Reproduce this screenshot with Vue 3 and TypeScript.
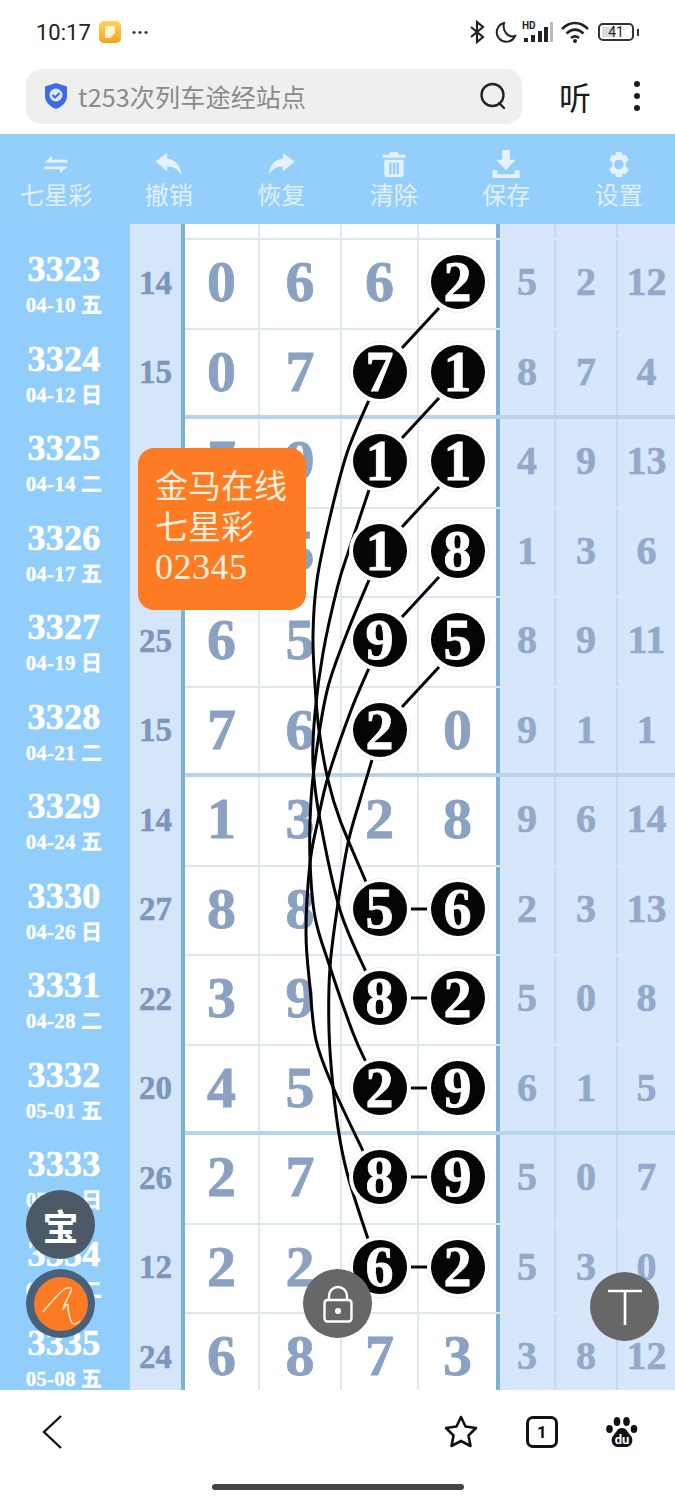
<script setup lang="ts">
interface Row { id: string; date: string; sum: string; main: string[]; balls: boolean[]; side: string[] }

const raw: [string, string, string, string, string, string][] = [
  ['3323', '04-10 五', '14', '0662', '0001', '5,2,12'],
  ['3324', '04-12 日', '15', '0771', '0011', '8,7,4'],
  ['3325', '04-14 二', '18', '7911', '0011', '4,9,13'],
  ['3326', '04-17 五', '14', '0518', '0011', '1,3,6'],
  ['3327', '04-19 日', '25', '6595', '0011', '8,9,11'],
  ['3328', '04-21 二', '15', '7620', '0010', '9,1,1'],
  ['3329', '04-24 五', '14', '1328', '0000', '9,6,14'],
  ['3330', '04-26 日', '27', '8856', '0011', '2,3,13'],
  ['3331', '04-28 二', '22', '3982', '0011', '5,0,8'],
  ['3332', '05-01 五', '20', '4529', '0011', '6,1,5'],
  ['3333', '05-03 日', '26', '2789', '0011', '5,0,7'],
  ['3334', '05-05 二', '12', '2262', '0011', '5,3,0'],
  ['3335', '05-08 五', '24', '6873', '0000', '3,8,12'],
]

const rows: Row[] = raw.map(([id, date, sum, main, balls, side]) => ({
  id,
  date,
  sum,
  main: main.split(''),
  balls: balls.split('').map((b) => b === '1'),
  side: side.split(','),
}))

type Pt = [number, number]

function smooth(p: Pt[]): string {
  let d = `M${p[0][0]} ${p[0][1]}`
  for (let i = 0; i < p.length - 1; i++) {
    const a = p[Math.max(i - 1, 0)]
    const b = p[i]
    const c = p[i + 1]
    const e = p[Math.min(i + 2, p.length - 1)]
    const c1: Pt = [b[0] + (c[0] - a[0]) / 6, b[1] + (c[1] - a[1]) / 6]
    const c2: Pt = [c[0] - (e[0] - b[0]) / 6, c[1] - (e[1] - b[1]) / 6]
    d += ` C${c1[0].toFixed(1)} ${c1[1].toFixed(1)} ${c2[0].toFixed(1)} ${c2[1].toFixed(1)} ${c[0]} ${c[1]}`
  }
  return d
}

const curves: string[] = ([
  [[369, 400], [347, 453], [330, 517], [317, 580], [313, 635], [315, 685], [319, 730], [328, 780], [340, 820], [366, 882]],
  [[369, 490], [350, 547], [338, 585], [323, 653], [315, 713], [313, 765], [320, 820], [340, 910], [366, 972]],
  [[369, 580], [347, 633], [328, 687], [317, 747], [311, 800], [310, 860], [315, 917], [330, 967], [353, 1033], [366, 1062]],
  [[369, 668], [350, 713], [328, 777], [318, 820], [310, 863], [306, 933], [310, 987], [316, 1040], [333, 1087], [363, 1151]],
  [[372, 760], [360, 800], [348, 843], [338, 903], [330, 967], [329, 1030], [333, 1087], [340, 1140], [349, 1180], [368, 1239]],
] as Pt[][]).map(smooth)

const links = [308, 398, 487, 577, 667].map((y) => ({ x1: 439, y1: y, x2: 402, y2: y + 40 }))
const dashes = [909, 998, 1088, 1177, 1267]

const tools = ['七星彩', '撤销', '恢复', '清除', '保存', '设置']
</script>

<template>
  <div class="screen">
    <header class="status">
      <div class="status-left">
        <span class="time">10:17</span>
        <svg class="app" viewBox="0 0 22 22">
          <defs>
            <linearGradient id="g" x1="0" y1="0" x2="0" y2="1">
              <stop offset="0" stop-color="#ffd35c" />
              <stop offset="1" stop-color="#f9a11b" />
            </linearGradient>
          </defs>
          <rect width="22" height="22" rx="5" fill="url(#g)" />
          <path d="M6 5h10v7l-5 5H6z" fill="#fff3d2" />
        </svg>
        <span class="more">···</span>
      </div>
      <div class="status-right">
        <svg width="17" height="24" viewBox="0 0 17 24" fill="none" stroke="#222" stroke-width="2.200">
          <path d="M2 7l12 10-6 5V2l6 5L2 17" />
        </svg>
        <svg class="moon" width="22" height="24" viewBox="0 0 22 24" fill="none" stroke="#222" stroke-width="2">
          <path d="M9 3a9.500 9.500 0 1 0 11 13C13 18 7 11 9 3z" />
        </svg>
        <svg class="signal" width="31" height="24" viewBox="0 0 31 24">
          <text x="0" y="9" class="hd">HD</text>
          <rect x="2" y="18" width="4" height="4" fill="#222" />
          <rect x="9" y="15" width="4" height="7" fill="#222" />
          <rect x="16" y="11" width="4" height="11" fill="#222" />
          <rect x="22" y="7" width="4" height="15" fill="#222" />
          <rect x="28" y="2" width="3" height="20" fill="#bbb" />
        </svg>
        <svg width="28" height="24" viewBox="0 0 28 24" fill="none" stroke="#222" stroke-width="2.600">
          <path d="M1 9c8-8 18-8 26 0M5.500 13.500c5.500-5 11.500-5 17 0M10 18c2.500-2 5.500-2 8 0" />
          <circle cx="14" cy="21" r="2" fill="#222" stroke="none" />
        </svg>
        <div class="battery"><span class="fill"></span><span class="level">41</span></div>
        <span class="nub"></span>
      </div>
    </header>

    <div class="searchrow">
      <div class="search">
        <svg class="shield" width="24" height="26" viewBox="0 0 24 26">
          <path d="M12 0l11 3.500V13c0 6-4.500 10.500-11 13C5.500 23.500 1 19 1 13V3.500z" fill="#3f6ae6" />
          <circle cx="12" cy="12" r="6.500" fill="#dfe7fb" />
          <path d="M8.500 12l2.500 2.500 4.500-4.500" fill="none" stroke="#3f6ae6" stroke-width="2" />
        </svg>
        <span class="query">t253次列车途经站点</span>
        <svg class="glass" width="28" height="28" viewBox="0 0 28 28" fill="none" stroke="#222" stroke-width="2.400">
          <circle cx="13.500" cy="13" r="11" />
          <path d="M20 21l5 5" stroke-linecap="round" />
        </svg>
      </div>
      <span class="listen">听</span>
      <div class="dots"><i></i><i></i><i></i></div>
    </div>

    <nav class="toolbar">
      <div v-for="(t, i) in tools" :key="t" class="tool">
        <svg width="30" height="30" viewBox="0 0 30 30" fill="#e4f2fd">
          <template v-if="i === 0">
            <path d="M3 13h24v-3H11V6zM27 17H3v3h16v4z" />
          </template>
          <template v-else-if="i === 1">
            <path d="M1 12l12-9v6c9 1 14 7 15 17-3-6-8-9-15-9v5z" />
          </template>
          <template v-else-if="i === 2">
            <path d="M29 12L17 3v6C8 10 3 16 2 26c3-6 8-9 15-9v5z" />
          </template>
          <template v-else-if="i === 3">
            <path fill-rule="evenodd" d="M11 2h8l1 3h7v3H3V5h7zM5 10h20v15c0 2-1 3-3 3H8c-2 0-3-1-3-3zM10 13v12h2.500V13zM13.800 13v12h2.500V13zM17.500 13v12H20V13z" />
          </template>
          <template v-else-if="i === 4">
            <path d="M11 0h8v10h6L15 21 5 10h6zM1 21h5v4h18v-4h5v8H1z" />
          </template>
          <template v-else>
            <path fill-rule="evenodd" d="M12 2h6l1 4 3-1 3 5-3 3v4l3 3-3 5-3-1-1 4h-6l-1-4-3 1-3-5 3-3v-4L5 10l3-5 3 1zM15 10a5 5 0 1 0 0 10 5 5 0 0 0 0-10z" />
          </template>
        </svg>
        <span>{{ t }}</span>
      </div>
    </nav>

    <main class="board">
      <div class="row head">
        <div class="period"></div>
        <div class="sum"></div>
        <div v-for="n in 4" :key="n" class="cell"></div>
        <div v-for="n in 3" :key="n" class="cell right" :class="'r' + n"></div>
      </div>
      <div v-for="(r, ri) in rows" :key="r.id" class="row" :class="{ thick: ri % 4 === 1 }">
        <div class="period">
          <span class="num">{{ r.id }}</span>
          <span class="date">{{ r.date }}</span>
        </div>
        <div class="sum">{{ r.sum }}</div>
        <div v-for="(d, i) in r.main" :key="i" class="cell">
          <span v-if="r.balls[i]" class="ball">{{ d }}</span>
          <template v-else>{{ d }}</template>
        </div>
        <div v-for="(d, i) in r.side" :key="i" class="cell right" :class="'r' + (i + 1)">{{ d }}</div>
      </div>

      <svg class="lines" viewBox="0 224 675 1166" fill="none" stroke="#050508" stroke-width="3">
        <path v-for="(c, i) in curves" :key="i" :d="c" />
        <line v-for="(l, i) in links" :key="i" :x1="l.x1" :y1="l.y1" :x2="l.x2" :y2="l.y2" />
        <line v-for="y in dashes" :key="y" x1="411" :y1="y" x2="427" :y2="y" />
      </svg>

      <div class="bubble">
        <div>金马在线</div>
        <div>七星彩</div>
        <div class="code">02345</div>
      </div>

      <div class="fab bao">宝</div>
      <div class="fab sign">
        <svg width="54" height="54" viewBox="0 0 54 54">
          <circle cx="27" cy="27" r="27" fill="#fb7a24" />
          <path d="M9 35C18 24 28 12 33 11c5-1 5 0 4 3-2 6-8 14-8 19 2-5 5-7 5-5 0 4 1 12 4 18 2 2 6 0 8-2" fill="none" stroke="#ffe2c2" stroke-width="1.500" />
        </svg>
      </div>
      <div class="fab lock">
        <svg width="30" height="38" viewBox="0 0 30 38" fill="none" stroke="#fff" stroke-width="2.400">
          <path d="M6 15V11a9 9 0 0 1 18 0v4" />
          <rect x="1.500" y="15" width="27" height="21.500" rx="3" />
          <circle cx="15" cy="26" r="3" fill="#fff" stroke="none" />
        </svg>
      </div>
      <div class="fab top">
        <svg width="36" height="40" viewBox="0 0 36 40" stroke="#fff" stroke-width="2.600">
          <path d="M1 4h34M18 4v34" />
        </svg>
      </div>
    </main>

    <footer class="bottom">
      <div class="navrow">
        <svg class="back" width="22" height="34" viewBox="0 0 22 34" fill="none" stroke="#111" stroke-width="2.400">
          <path d="M20 1L3 17l17 16" />
        </svg>
        <div class="navright">
          <svg width="34" height="34" viewBox="0 0 34 34" fill="none" stroke="#111" stroke-width="2.600" stroke-linejoin="round">
            <path d="M17 2l4.500 9.500 10.500 1.500-7.500 7.500 2 10.500-9.500-5-9.500 5 2-10.500L2 13l10.500-1.500z" />
          </svg>
          <div class="tabs">1</div>
          <svg width="32" height="32" viewBox="0 0 32 32">
            <ellipse cx="3.500" cy="13" rx="3.300" ry="4" fill="#111" />
            <ellipse cx="11" cy="5.500" rx="3.300" ry="4.500" fill="#111" />
            <ellipse cx="20.500" cy="5.500" rx="3.300" ry="4.500" fill="#111" />
            <ellipse cx="28" cy="13" rx="3.300" ry="4" fill="#111" />
            <path d="M16 12c5 0 6 5 9 8 3 4 1 11-5 11h-8c-6 0-8-7-5-11 3-3 4-8 9-8z" fill="#111" />
            <text x="16" y="28" text-anchor="middle" class="du">du</text>
          </svg>
        </div>
      </div>
      <div class="home"></div>
    </footer>
  </div>
</template>

<style scoped>
.screen {
  position: relative;
  width: 675px;
  height: 1500px;
  display: flex;
  flex-direction: column;
  background: #fff;
  overflow: hidden;
  font-family: "Noto Sans CJK SC", "Noto Sans", sans-serif;
}
.status {
  height: 60px;
  flex: none;
  display: flex;
  justify-content: space-between;
  align-items: center;
  padding: 4px 36px 0 36px;
  box-sizing: border-box;
}
.status-left, .status-right {
  display: flex;
  align-items: center;
}
.time {
  font: 22px Roboto, sans-serif;
  color: #222;
  width: 63px;
}
.app { width: 22px; height: 22px; }
.more {
  margin-left: 10px;
  font: bold 20px Roboto, sans-serif;
  color: #333;
}
.status-right { gap: 8px; }
.moon { margin-left: 1px; }
.signal { margin-left: -3px; }
.hd { font: bold 10px Roboto, sans-serif; fill: #222; }
.battery {
  position: relative;
  width: 36px;
  height: 18px;
  border: 2px solid #333;
  border-radius: 5px;
  box-sizing: border-box;
  display: flex;
  align-items: center;
  justify-content: center;
  margin-left: 1px;
}
.fill {
  position: absolute;
  left: 2px;
  top: 2px;
  bottom: 2px;
  width: 11px;
  background: #ddd;
}
.level {
  position: relative;
  font: 14px Roboto, sans-serif;
  color: #222;
}
.nub {
  width: 2px;
  height: 7px;
  background: #333;
  margin-left: -5px;
}
.searchrow {
  height: 74px;
  flex: none;
  display: flex;
  align-items: center;
  padding: 0 0 2px 26px;
  box-sizing: border-box;
}
.search {
  width: 496px;
  height: 55px;
  background: #efefef;
  border-radius: 16px;
  display: flex;
  align-items: center;
  padding: 0 15px 0 18px;
  box-sizing: border-box;
}
.shield { flex: none; }
.query {
  margin-left: 10px;
  font-size: 25px;
  letter-spacing: 0.2px;
  color: #8b8b8b;
  flex: 1;
}
.listen {
  margin-left: 37px;
  font-size: 32px;
  color: #1c1c1c;
  line-height: 1;
}
.dots {
  margin-left: 43px;
  display: flex;
  flex-direction: column;
  gap: 6px;
}
.dots i {
  display: block;
  width: 6px;
  height: 6px;
  border-radius: 50%;
  background: #1c1c1c;
}
.toolbar {
  height: 90px;
  flex: none;
  background: #94cffc;
  display: flex;
}
.tool {
  flex: 1;
  display: flex;
  flex-direction: column;
  align-items: center;
  padding-top: 16px;
  box-sizing: border-box;
  color: #e0f1fd;
  font-size: 24px;
  line-height: 30px;
}
.tool svg { height: 29px; }
.board {
  position: relative;
  height: 1166px;
  flex: none;
  overflow: hidden;
  background: #fff;
}
.row {
  display: grid;
  grid-template-columns: 130px 55px 75px 82px 77px 77px 60px 62px 57px;
  height: 89.5px;
  box-sizing: border-box;
  border-bottom: 2px solid #dce7f1;
}
.row.head { height: 16px; }
.row.thick { border-bottom: 4px solid #b8d3ea; }
.period {
  background: #92cefc;
  display: flex;
  flex-direction: column;
  align-items: center;
  color: #fff;
  font-family: "Liberation Serif", "Noto Sans CJK SC", serif;
  font-weight: bold;
  padding: 8px 2px 0 0;
  box-sizing: border-box;
  margin-bottom: -2px;
}
.row.thick .period { margin-bottom: -4px; }
.num {
  font-size: 36px;
  line-height: 42px;
  -webkit-text-stroke: 0.6px #fff;
  letter-spacing: 0.3px;
}
.date {
  font-size: 21px;
  line-height: 26px;
  margin-top: 2px;
  -webkit-text-stroke: 0.3px #fff;
  letter-spacing: 0.2px;
}
.sum {
  background: #d6e6fa;
  border-right: 4px solid #7db2d4;
  display: flex;
  align-items: center;
  justify-content: center;
  color: #7b97ba;
  font: bold 33px "Liberation Serif", serif;
  -webkit-text-stroke: 0.5px #7b97ba;
  box-sizing: border-box;
  margin-bottom: -2px;
  padding-bottom: 3px;
}
.cell {
  display: flex;
  align-items: center;
  justify-content: center;
  border-right: 2px solid #dfe9f2;
  color: #8aa1c1;
  font: bold 58px "Liberation Serif", serif;
  -webkit-text-stroke: 0.8px #8aa1c1;
  box-sizing: border-box;
  padding-bottom: 3px;
  line-height: 1;
  min-width: 0;
}
.row.thick .cell { padding-bottom: 1px; }
.row.thick .sum { margin-bottom: -4px; padding-bottom: 3px; }
.cell:nth-child(6) { border-right: none; }
.cell.right {
  background: #d6e7fb;
  color: #93a9c9;
  -webkit-text-stroke: 0.6px #93a9c9;
  font-size: 40px;
  border-right: 2px solid #c5daee;
}
.cell.r1 { border-left: 4px solid #7db2d4; }
.cell.r3 { border-right: none; }
.ball {
  position: relative;
  z-index: 2;
  width: 54px;
  height: 54px;
  border-radius: 50%;
  background: #050508;
  color: #fff;
  display: flex;
  align-items: center;
  justify-content: center;
  box-shadow: 0 0 0 3px #fff, 0 0 0 4px #eeeef0;
  font-size: 56px;
  -webkit-text-stroke: 0.8px #fff;
}
.lines {
  position: absolute;
  left: 0;
  top: 0;
  width: 675px;
  height: 1166px;
  z-index: 1;
}
.bubble {
  position: absolute;
  left: 138px;
  top: 224px;
  width: 168px;
  height: 162px;
  box-sizing: border-box;
  padding: 16px 0 0 17px;
  background: #fd7c23;
  border-radius: 16px;
  color: #ffeedd;
  font-size: 33px;
  line-height: 41px;
  z-index: 3;
}
.code {
  font-family: "Liberation Serif", serif;
  font-size: 36px;
  letter-spacing: 0.5px;
  margin-top: 1px;
}
.fab {
  position: absolute;
  width: 69px;
  height: 69px;
  border-radius: 50%;
  display: flex;
  align-items: center;
  justify-content: center;
  z-index: 4;
}
.bao {
  left: 26px;
  top: 966px;
  background: #4c5a68;
  color: #fff;
  font-size: 36px;
  font-weight: 700;
}
.sign { left: 26px; top: 1045px; background: #47617a; }
.lock { left: 303px; top: 1045px; background: #676767; }
.top { left: 590px; top: 1048px; background: #676767; }
.bottom {
  flex: 1;
  display: flex;
  flex-direction: column;
  background: #fff;
  padding-top: 25px;
  box-sizing: border-box;
}
.navrow {
  display: flex;
  justify-content: space-between;
  align-items: center;
  padding: 0 37px 0 41px;
}
.navright {
  display: flex;
  align-items: center;
  gap: 48px;
}
.tabs {
  width: 32px;
  height: 32px;
  border: 3px solid #111;
  border-radius: 7px;
  box-sizing: border-box;
  display: flex;
  align-items: center;
  justify-content: center;
  font: bold 17px Roboto, sans-serif;
  color: #111;
}
.du { font: bold 13px Roboto, sans-serif; fill: #fff; }
.home {
  width: 252px;
  height: 6px;
  border-radius: 3px;
  background: #444;
  margin: 35px auto 0;
}
</style>
